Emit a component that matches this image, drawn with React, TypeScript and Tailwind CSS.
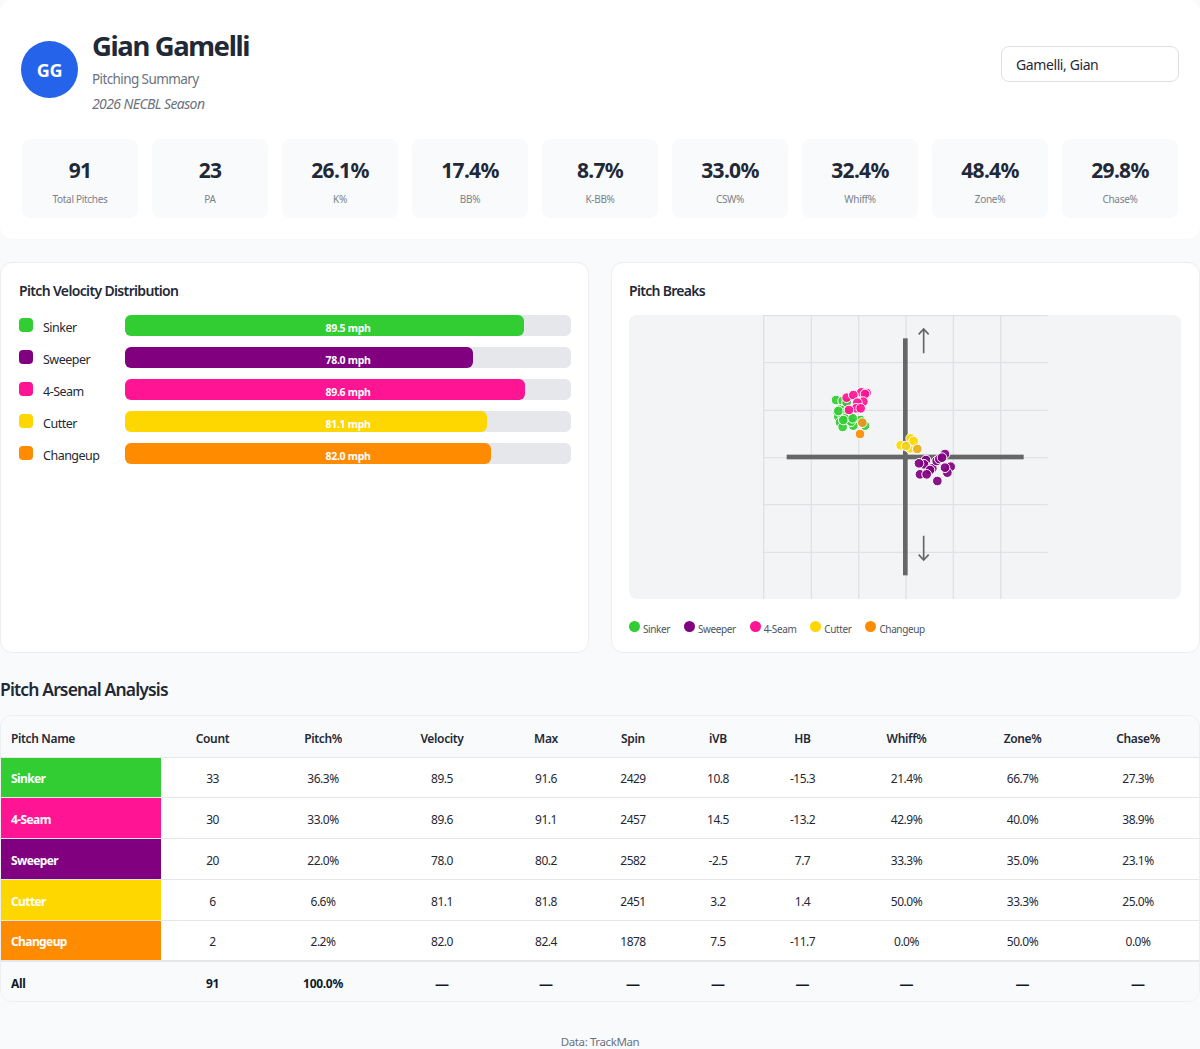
const pitches = [
  { name: "Sinker", color: "#32cd32", velo: 89.5 },
  { name: "Sweeper", color: "#800080", velo: 78.0 },
  { name: "4-Seam", color: "#ff1493", velo: 89.6 },
  { name: "Cutter", color: "#ffd700", velo: 81.1 },
  { name: "Changeup", color: "#ff8c00", velo: 82.0 },
];

const stats = [
  ["91", "Total Pitches"],
  ["23", "PA"],
  ["26.1%", "K%"],
  ["17.4%", "BB%"],
  ["8.7%", "K-BB%"],
  ["33.0%", "CSW%"],
  ["32.4%", "Whiff%"],
  ["48.4%", "Zone%"],
  ["29.8%", "Chase%"],
];

const rows = [
  { name: "Sinker", color: "#32cd32", vals: ["33", "36.3%", "89.5", "91.6", "2429", "10.8", "-15.3", "21.4%", "66.7%", "27.3%"] },
  { name: "4-Seam", color: "#ff1493", vals: ["30", "33.0%", "89.6", "91.1", "2457", "14.5", "-13.2", "42.9%", "40.0%", "38.9%"] },
  { name: "Sweeper", color: "#800080", vals: ["20", "22.0%", "78.0", "80.2", "2582", "-2.5", "7.7", "33.3%", "35.0%", "23.1%"] },
  { name: "Cutter", color: "#ffd700", vals: ["6", "6.6%", "81.1", "81.8", "2451", "3.2", "1.4", "50.0%", "33.3%", "25.0%"] },
  { name: "Changeup", color: "#ff8c00", vals: ["2", "2.2%", "82.0", "82.4", "1878", "7.5", "-11.7", "0.0%", "50.0%", "0.0%"] },
];

const headers = ["Count", "Pitch%", "Velocity", "Max", "Spin", "iVB", "HB", "Whiff%", "Zone%", "Chase%"];

// dot positions, in the chart's viewBox units
const dots: [string, number, number][] = [
  ["#32cd32", 648, 285], ["#32cd32", 668, 288], ["#32cd32", 662, 313], ["#32cd32", 652, 320], ["#32cd32", 672, 314],
  ["#32cd32", 655, 335], ["#32cd32", 668, 330], ["#32cd32", 690, 325], ["#32cd32", 660, 352], ["#32cd32", 668, 366],
  ["#32cd32", 700, 362], ["#32cd32", 722, 345], ["#32cd32", 735, 362], ["#32cd32", 693, 350], ["#32cd32", 680, 320],
  ["#32cd32", 655, 318], ["#32cd32", 675, 340], ["#32cd32", 670, 345], ["#32cd32", 698, 340], ["#4fae3f", 680, 292],
  ["#ff1493", 680, 278], ["#ff1493", 724, 262], ["#ff1493", 740, 264], ["#ff1493", 700, 270], ["#ff1493", 735, 267],
  ["#ff1493", 730, 290], ["#ff1493", 712, 293], ["#ff1493", 708, 310], ["#ff1493", 722, 310], ["#ff1493", 687, 315],
  ["#ff8c00", 720, 387], ["#e9951a", 727, 353],
  ["#ffd700", 842, 421], ["#ffd700", 872, 400], ["#ffd700", 870, 430], ["#ffd700", 881, 408], ["#f5d21c", 858, 423], ["#e8ad18", 892, 432],
  ["#800080", 918, 465], ["#800080", 912, 478], ["#800080", 897, 475], ["#800080", 937, 490], ["#800080", 930, 495],
  ["#800080", 900, 508], ["#800080", 920, 508], ["#800080", 975, 447], ["#800080", 950, 468], ["#800080", 958, 462],
  ["#800080", 966, 458], ["#800080", 992, 485], ["#800080", 982, 503], ["#800080", 975, 488], ["#800080", 952, 528],
];

function BreakChart() {
  const vertical = [431, 574, 716, 858, 1000, 1142];
  const horizontal = [32, 173, 316, 458, 599, 742];
  return (
    <svg viewBox="27 30 1656 852" className="block w-full h-full">
      {vertical.map((x) => (
        <line key={x} x1={x} x2={x} y1={30} y2={882} stroke="#dfe1e6" strokeWidth="4" />
      ))}
      {horizontal.map((y) => (
        <line key={y} x1={431} x2={1283} y1={y} y2={y} stroke="#dfe1e6" strokeWidth="4" />
      ))}
      <rect x="500" y="449" width="711" height="14" fill="#666666" />
      <rect x="849" y="100" width="14" height="711" fill="#666666" />
      <path d="M911 145V72M896 88L911 72L926 88" fill="none" stroke="#666666" strokeWidth="5" />
      <path d="M911 692V765M896 749L911 765L926 749" fill="none" stroke="#666666" strokeWidth="5" />
      {dots.map(([color, x, y], i) => (
        <circle key={i} cx={x} cy={y} r="14.5" fill={color} fillOpacity="0.92" stroke="#ffffff" strokeWidth="3" />
      ))}
    </svg>
  );
}

export default function App() {
  return (
    <div className="h-[1049px] w-[1200px] overflow-hidden bg-[#f9fafb] font-['Noto_Sans',sans-serif] text-[#1f2937]">
      <div className="h-[239px] rounded-xl bg-white px-[22px] shadow-[0_1px_2px_rgba(0,0,0,0.02)]">
        <div className="flex h-[139px] items-center justify-between">
          <div className="flex items-center gap-[14px]">
            <div className="-ml-px flex h-[57px] w-[57px] items-center justify-center rounded-full bg-[#2563eb] pt-[2px] text-[18px] font-bold tracking-[-0.3px] text-white">GG</div>
            <div className="mt-[4px]">
              <h1 className="text-[27.5px] leading-[34px] font-bold tracking-[-1.4px]">Gian Gamelli</h1>
              <p className="mt-[6px] text-[13.5px] leading-[20px] tracking-[-0.6px] text-[#6b7280]">Pitching Summary</p>
              <p className="mt-[5px] text-[14px] leading-[20px] tracking-[-0.6px] italic text-[#6b7280]">2026 NECBL Season</p>
            </div>
          </div>
          <div className="-mr-px mb-[11px] flex h-[36px] w-[178px] items-center rounded-lg border border-[#dde1e6] bg-white pl-[14px] text-[14px] tracking-[-0.4px] text-[#1f2937]">Gamelli, Gian</div>
        </div>
        <div className="grid grid-cols-9 gap-[14px]">
          {stats.map(([value, label]) => (
            <div key={label} className="flex h-[79px] flex-col items-center rounded-lg bg-[#f9fafb] pt-[16px]">
              <div className="text-[21px] leading-[30px] font-bold tracking-[-0.7px]">{value}</div>
              <div className="mt-[6px] text-[10px] leading-[16px] tracking-[-0.3px] text-[#7b818c]">{label}</div>
            </div>
          ))}
        </div>
      </div>

      <div className="mt-[23px] grid h-[391px] grid-cols-2 gap-[22px]">
        <div className="rounded-xl border border-[#eceef1] bg-white pr-[17px] pl-[18px] pt-[17px]">
          <h2 className="text-[14px] leading-[22px] font-semibold tracking-[-0.65px]">Pitch Velocity Distribution</h2>
          <div className="mt-[13px] flex flex-col gap-[11px]">
            {pitches.map((p) => (
              <div key={p.name} className="flex h-[21px] items-center">
                <div className="mt-[-1px] h-[14px] w-[14px] rounded-[4px]" style={{ backgroundColor: p.color }} />
                <div className="mt-[5px] ml-[10px] w-[82px] text-[12.5px] leading-[18px] tracking-[-0.5px] text-[#1f2937]">{p.name}</div>
                <div className="relative h-[21px] flex-1 rounded-md bg-[#e5e7eb]">
                  <div className="h-full rounded-md" style={{ width: `${p.velo}%`, backgroundColor: p.color }} />
                  <div className="absolute inset-0 pt-[3px] text-center text-[10.5px] leading-[20px] font-bold tracking-[-0.3px] text-white">{p.velo.toFixed(1)} mph</div>
                </div>
              </div>
            ))}
          </div>
        </div>

        <div className="rounded-xl border border-[#eceef1] bg-white px-[17px] pt-[17px]">
          <h2 className="text-[14px] leading-[22px] font-semibold tracking-[-0.7px]">Pitch Breaks</h2>
          <div className="mt-[13px] h-[284px] w-[552px] overflow-hidden rounded-lg bg-[#f3f4f6]">
            <BreakChart />
          </div>
          <div className="mt-[22px] flex gap-[14px]">
            {pitches.map((p) => (
              <div key={p.name} className="flex items-center">
                <div className="mt-[-5px] h-[11px] w-[11px] rounded-full" style={{ backgroundColor: p.color }} />
                <div className="ml-[3px] text-[10px] leading-[16px] tracking-[-0.4px] text-[#4b5563]">{p.name}</div>
              </div>
            ))}
          </div>
        </div>
      </div>

      <h2 className="mt-[23px] text-[17.5px] leading-[26px] font-semibold tracking-[-0.85px]">Pitch Arsenal Analysis</h2>
      <div className="mt-[13px] overflow-hidden rounded-xl border border-[#eceef1] bg-white">
        <table className="w-full table-fixed border-collapse text-[12px] text-[#1f2937]">
          <colgroup>
            <col className="w-[160px]" />
            <col className="w-[103px]" />
            <col className="w-[118px]" />
            <col className="w-[120px]" />
            <col className="w-[88px]" />
            <col className="w-[86px]" />
            <col className="w-[84px]" />
            <col className="w-[85px]" />
            <col className="w-[123px]" />
            <col className="w-[109px]" />
            <col />
          </colgroup>
          <thead>
            <tr className="h-[41px] bg-[#f9fafb] font-semibold">
              <th className="pl-[10px] pt-[6px] text-left font-semibold tracking-[-0.35px]">Pitch Name</th>
              {headers.map((h) => (
                <th key={h} className="pt-[6px] text-center font-semibold tracking-[-0.35px]">{h}</th>
              ))}
            </tr>
          </thead>
          <tbody>
            {rows.map((r) => (
              <tr key={r.name} className="h-[40.8px] border-t border-[#e5e7eb]">
                <td className="pl-[10px] pt-[4px] font-bold tracking-[-0.6px] text-white" style={{ backgroundColor: r.color }}>{r.name}</td>
                {r.vals.map((v, i) => (
                  <td key={i} className="pt-[4px] text-center tracking-[-0.5px]">{v}</td>
                ))}
              </tr>
            ))}
            <tr className="h-[40px] border-t-2 border-[#e5e7eb] bg-[#f9fafb] font-bold text-[#111827]">
              <td className="pl-[10px] pt-[6px] tracking-[-0.3px]">All</td>
              <td className="pt-[6px] text-center tracking-[-0.3px]">91</td>
              <td className="pt-[6px] text-center tracking-[-0.3px]">100.0%</td>
              {["a", "b", "c", "d", "e", "f", "g", "h"].map((k) => (
                <td key={k} className="pt-[6px] text-center text-[14px] leading-[16px]">—</td>
              ))}
            </tr>
          </tbody>
        </table>
      </div>
      <div className="mt-[32px] text-center text-[11.5px] leading-[16px] tracking-[-0.4px] text-[#6b7280]">Data: TrackMan</div>
    </div>
  );
}
